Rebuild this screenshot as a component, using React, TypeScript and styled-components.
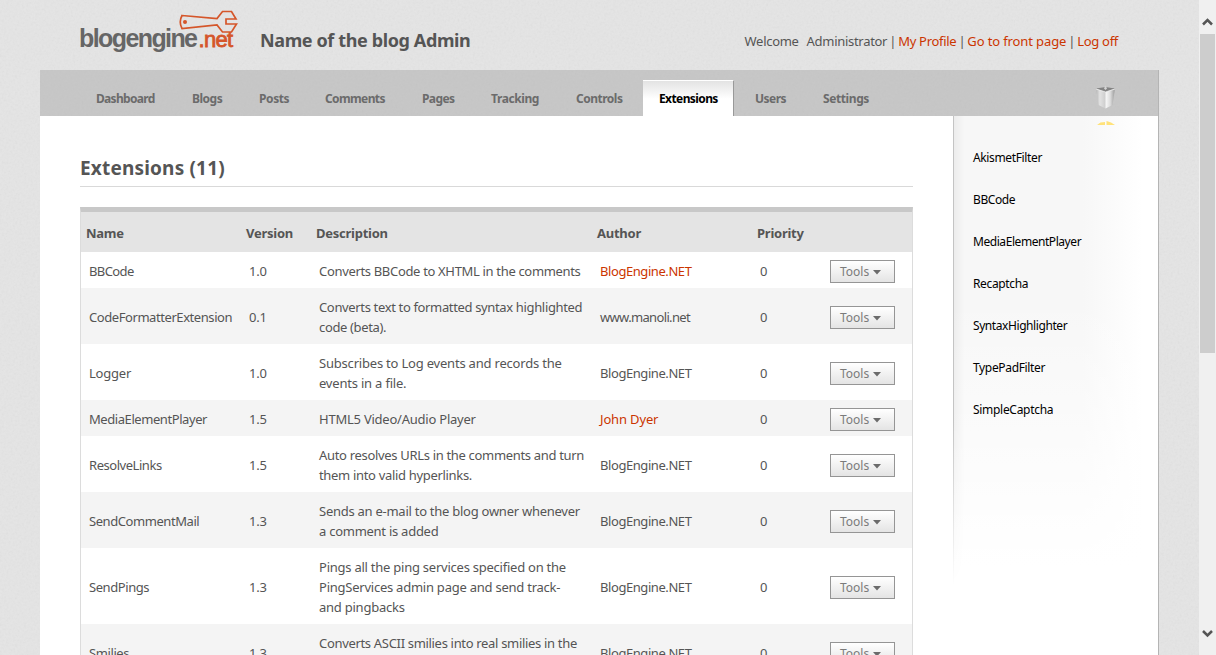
import React from "react";
import styled, { createGlobalStyle, css } from "styled-components";

const Global = createGlobalStyle`
  * { box-sizing: border-box; }
  body { margin: 0; overflow: hidden; background: #e1e1e1; }
`;

const Window = styled.div`
  display: flex;
  width: 1216px;
  height: 655px;
  overflow: hidden;
  font: 13px/20px "Noto Sans", "Open Sans", sans-serif;
  color: #555;
`;

const Page = styled.div`
  position: relative;
  width: 1199px;
  height: 655px;
  overflow: hidden;
  padding: 0 40px;
  background: #e5e5e5;
`;

const Grain = styled.svg`
  position: absolute;
  inset: 0;
  width: 100%;
  height: 100%;
  opacity: 0.1;
`;

const Header = styled.header`
  position: relative;
  height: 70px;
  display: flex;
  align-items: flex-start;
  padding-left: 38px;
`;

const BlogTitle = styled.h1`
  margin: 26px 0 0 22px;
  font-size: 18px;
  line-height: 28px;
  font-weight: 700;
  letter-spacing: -0.38px;
  white-space: nowrap;
`;

const Account = styled.div`
  display: flex;
  margin: 31px 41px 0 auto;
  white-space: nowrap;
  letter-spacing: -0.3px;
`;

const UserName = styled.span`
  margin-left: 8px;
`;

const Bar = styled.span`
  width: 11px;
  text-align: center;
`;

const Link = styled.a<{ $tracking?: number }>`
  color: #cb3500;
  ${(p) => p.$tracking !== undefined && `letter-spacing: ${p.$tracking}px;`}
`;

const Nav = styled.nav`
  position: relative;
  width: 1119px;
  height: 46px;
  padding: 10px 0 0 40px;
  display: flex;
  background: rgba(170, 170, 170, 0.5);
  border-right: 1px solid #b4b4b4;
`;

const Tab = styled.a<{ $w: number; $tracking: number; $active?: boolean }>`
  width: ${(p) => p.$w}px;
  height: 36px;
  padding-left: 16px;
  line-height: 37px;
  font-size: 12px;
  font-weight: 700;
  letter-spacing: ${(p) => p.$tracking}px;
  color: #6b6b6b;
  ${(p) =>
    p.$active &&
    css`
      margin-right: 5px;
      color: #000;
      background: linear-gradient(#e3e3e3, #fff 18px);
      border-top: 1px solid #fff;
      border-right: 1px solid #999;
      line-height: 36px;
    `}
`;

const Trash = styled.svg`
  position: absolute;
  z-index: 1;
  left: 1054px;
  top: 14px;
`;

const Body = styled.div`
  position: relative;
  display: flex;
  width: 1119px;
  height: 539px;
  background: #fff;
  border-right: 1px solid #b4b4b4;
`;

const Main = styled.main`
  width: 873px;
  margin-right: 40px;
  padding: 39px 0 0 40px;
`;

const Heading = styled.h2`
  margin: 0 0 20px;
  height: 32px;
  border-bottom: 1px solid #d9d9d9;
  font-size: 19px;
  line-height: 27px;
  font-weight: 700;
  letter-spacing: 0.18px;
`;

const Table = styled.div`
  border: 1px solid #dcdcdc;
  border-top: 5px solid #c8c8c8;
`;

const Row = styled.div<{ $head?: boolean; $alt?: boolean }>`
  display: grid;
  grid-template-columns: 160px 70px 281px 160px 73px 1fr;
  align-items: center;
  padding: ${(p) => (p.$head ? "11px 5px 9px" : "9px 8px 7px")};
  font-weight: ${(p) => (p.$head ? 700 : 400)};
  background: ${(p) => (p.$head ? "#e4e4e4" : p.$alt ? "#f4f4f4" : "#fff")};
  letter-spacing: -0.25px;
`;

const Cell = styled.span<{ $tracking?: number }>`
  white-space: pre;
  letter-spacing: ${(p) => p.$tracking ?? -0.2}px;
`;

const ToolsButton = styled.button`
  width: 65px;
  height: 23px;
  margin: -2px 0 -2px -3px;
  padding: 2px 0 0 9px;
  display: flex;
  align-items: center;
  gap: 4px;
  border: 1px solid #959595;
  background: linear-gradient(#fff, #e4e4e4);
  font: 12px/20px "Noto Sans", sans-serif;
  color: #7b7b7b;
`;

const Side = styled.aside`
  position: relative;
  width: 205px;
  padding: 32px 0 0 20px;
  display: flex;
  flex-direction: column;
  gap: 22px;
  background:
    linear-gradient(to bottom, transparent 180px, #fff 450px),
    linear-gradient(to right, #f7f7f7 130px, #fff 190px);
`;

const SideEdge = styled.span`
  position: absolute;
  left: 0;
  top: 0;
  width: 12px;
  height: 470px;
  border-left: 1px solid #c4c4c4;
  background: linear-gradient(
    to right,
    rgba(0, 0, 0, 0.04),
    transparent
  );
  mask-image: linear-gradient(#000 65%, transparent);
`;

const SideLink = styled.a<{ $tracking: number }>`
  font-size: 12px;
  line-height: 20px;
  color: #000;
  letter-spacing: ${(p) => p.$tracking}px;
`;

const Scrollbar = styled.div`
  width: 17px;
  height: 655px;
  padding: 0 1px;
  background: #f0f0f0;
  display: flex;
  flex-direction: column;
`;

const Thumb = styled.div`
  width: 15px;
  height: 319px;
  background: #cdcdcd;
`;

const Arrow = styled.svg<{ $bottom?: boolean }>`
  display: block;
  flex: none;
  margin-top: ${(p) => (p.$bottom ? "auto" : 0)};
`;

/* label, width, letter spacing */
const tabs: [string, number, number][] = [
  ["Dashboard", 96, -0.68],
  ["Blogs", 67, -0.5],
  ["Posts", 66, -0.4],
  ["Comments", 97, -0.62],
  ["Pages", 69, -0.6],
  ["Tracking", 85, -0.4],
  ["Controls", 83, -0.5],
  ["Extensions", 91, -0.6],
  ["Users", 68, -0.5],
  ["Settings", 80, -0.4],
];

type Extension = {
  name: string;
  nameTracking: number;
  version: string;
  description: string;
  tracking: number;
  author: string;
  authorTracking?: number;
  linked?: boolean;
};

const rows: Extension[] = [
  { name: "BBCode", nameTracking: -0.6, version: "1.0", description: "Converts BBCode to XHTML in the comments", tracking: -0.33, author: "BlogEngine.NET", linked: true },
  { name: "CodeFormatterExtension", nameTracking: -0.43, version: "0.1", description: "Converts text to formatted syntax highlighted\ncode (beta).", tracking: -0.35, author: "www.manoli.net", authorTracking: -0.66 },
  { name: "Logger", nameTracking: -0.2, version: "1.0", description: "Subscribes to Log events and records the\nevents in a file.", tracking: -0.2, author: "BlogEngine.NET" },
  { name: "MediaElementPlayer", nameTracking: -0.43, version: "1.5", description: "HTML5 Video/Audio Player", tracking: -0.23, author: "John Dyer", authorTracking: -0.15, linked: true },
  { name: "ResolveLinks", nameTracking: -0.46, version: "1.5", description: "Auto resolves URLs in the comments and turn\nthem into valid hyperlinks.", tracking: -0.32, author: "BlogEngine.NET" },
  { name: "SendCommentMail", nameTracking: -0.43, version: "1.3", description: "Sends an e-mail to the blog owner whenever\na comment is added", tracking: -0.26, author: "BlogEngine.NET" },
  { name: "SendPings", nameTracking: -0.43, version: "1.3", description: "Pings all the ping services specified on the\nPingServices admin page and send track-\nand pingbacks", tracking: -0.24, author: "BlogEngine.NET" },
  { name: "Smilies", nameTracking: -0.4, version: "1.3", description: "Converts ASCII smilies into real smilies in the\ncomments", tracking: -0.32, author: "BlogEngine.NET" },
];

const sideLinks: [string, number][] = [
  ["AkismetFilter", -0.36],
  ["BBCode", -0.4],
  ["MediaElementPlayer", -0.44],
  ["Recaptcha", -0.36],
  ["SyntaxHighlighter", -0.42],
  ["TypePadFilter", -0.34],
  ["SimpleCaptcha", -0.3],
];

function Logo() {
  return (
    <svg width="160" height="60" viewBox="78 0 160 60">
      <text x="79" y="46.500" fontFamily="Liberation Sans" fontWeight="700" fontSize="25" fill="#666" textLength="119" lengthAdjust="spacing">blogengine</text>
      <text x="198.500" y="46.500" fontFamily="Liberation Sans" fontSize="22" fill="#d5562a" stroke="#d5562a" strokeWidth=".8" textLength="34.500" lengthAdjust="spacing">.net</text>
      <path d="M182 15.500 L217 18.500 L222.500 11.500 H231.500 L236 19 H226 V24 H236.500 L231.500 32 H222.500 L217 25 L182 28.500 Q178.500 22 182 15.500Z" fill="none" stroke="#d5562a" strokeWidth="1.7" />
      <circle cx="185" cy="22" r="2" fill="#d5562a" />
    </svg>
  );
}

function TrashIcon() {
  return (
    <Trash width="24" height="44" viewBox="0 0 24 44">
      <defs>
        <linearGradient id="bin-left">
          <stop offset="0" stopColor="#b4b4b4" />
          <stop offset=".4" stopColor="#e2e2e2" />
          <stop offset="1" stopColor="#cdcdcd" />
        </linearGradient>
        <linearGradient id="bin-right">
          <stop offset="0" stopColor="#fafafa" />
          <stop offset=".5" stopColor="#dcdcdc" />
          <stop offset="1" stopColor="#999" />
        </linearGradient>
      </defs>
      <path d="M2 4.500 L11.500 8 V24.500 L4.500 21Z" fill="url(#bin-left)" />
      <path d="M21 4.500 L11.500 8 V24.500 L18.500 21Z" fill="url(#bin-right)" />
      <path d="M2 4.500 L11.500 3 L21 4.500 L11.500 8Z" fill="#838383" />
      <path d="M2 5 L11.500 8 L21 5" fill="none" stroke="#efefef" strokeWidth=".8" />
      <path d="M10 4.500 L11.500 1.500 L13 4.500 L11.500 6Z" fill="#d4d4d4" />
      <path d="M3 41 L6.500 38.500 L11 38 V41Z M12.500 41 V37 L17 38.500 L21 41Z" fill="#ffe27a" />
    </Trash>
  );
}

export default function App() {
  return (
    <Window>
      <Global />
      <Page>
        <Grain>
          <filter id="grain" x="0" y="0" width="100%" height="100%">
            <feTurbulence type="fractalNoise" baseFrequency="0.45" numOctaves="2" />
            <feColorMatrix type="saturate" values="0" />
          </filter>
          <rect width="100%" height="100%" filter="url(#grain)" />
        </Grain>
        <Header>
          <Logo />
          <BlogTitle>Name of the blog Admin</BlogTitle>
          <Account>
            <span>Welcome</span>
            <UserName>Administrator</UserName>
            <Bar>|</Bar>
            <Link>My Profile</Link>
            <Bar>|</Bar>
            <Link $tracking={-0.12}>Go to front page</Link>
            <Bar>|</Bar>
            <Link>Log off</Link>
          </Account>
        </Header>
        <Nav>
          {tabs.map(([label, width, tracking]) => (
            <Tab key={label} $w={width} $tracking={tracking} $active={label === "Extensions"}>
              {label}
            </Tab>
          ))}
          <TrashIcon />
        </Nav>
        <Body>
          <Main>
            <Heading>Extensions (11)</Heading>
            <Table>
              <Row $head>
                <span>Name</span>
                <span>Version</span>
                <span>Description</span>
                <span>Author</span>
                <span>Priority</span>
              </Row>
              {rows.map((r, i) => (
                <Row key={r.name} $alt={i % 2 === 1}>
                  <Cell $tracking={r.nameTracking}>{r.name}</Cell>
                  <Cell>{r.version}</Cell>
                  <Cell $tracking={r.tracking}>{r.description}</Cell>
                  <Cell $tracking={r.authorTracking ?? -0.43}>
                    {r.linked ? <Link>{r.author}</Link> : r.author}
                  </Cell>
                  <Cell>0</Cell>
                  <ToolsButton>
                    Tools
                    <svg width="8" height="5">
                      <path d="M0 0H8L4 4.500Z" fill="#6b6b6b" />
                    </svg>
                  </ToolsButton>
                </Row>
              ))}
            </Table>
          </Main>
          <Side>
            <SideEdge />
            {sideLinks.map(([label, tracking]) => (
              <SideLink key={label} $tracking={tracking}>{label}</SideLink>
            ))}
          </Side>
        </Body>
      </Page>
      <Scrollbar>
        <Arrow width="15" height="34">
          <path d="M3 24.500 L7.500 20 L12 24.500" fill="none" stroke="#555" strokeWidth="2.500" />
        </Arrow>
        <Thumb />
        <Arrow $bottom width="15" height="34">
          <path d="M3 10 L7.500 14.500 L12 10" fill="none" stroke="#555" strokeWidth="2.500" />
        </Arrow>
      </Scrollbar>
    </Window>
  );
}
